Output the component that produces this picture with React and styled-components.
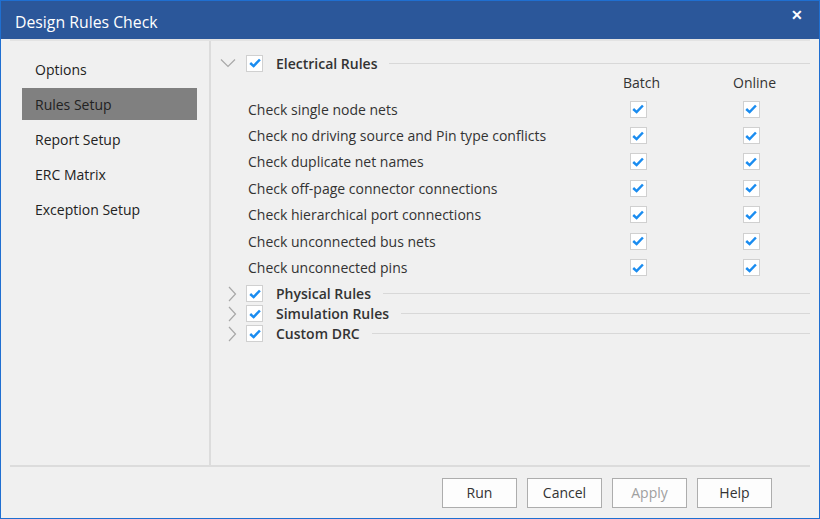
import React from 'react';
import styled, { createGlobalStyle } from 'styled-components';

const GlobalStyle = createGlobalStyle`
  html, body { margin: 0; padding: 0; }
  body {
    font-family: "Open Sans", "Noto Sans", "Liberation Sans", sans-serif;
    background: #f0f0f0;
  }
`;

const navItems = ['Options', 'Rules Setup', 'Report Setup', 'ERC Matrix', 'Exception Setup'];

const electrical = [
  'Check single node nets',
  'Check no driving source and Pin type conflicts',
  'Check duplicate net names',
  'Check off-page connector connections',
  'Check hierarchical port connections',
  'Check unconnected bus nets',
  'Check unconnected pins',
];

const collapsed = ['Physical Rules', 'Simulation Rules', 'Custom DRC'];

function Check() {
  return (
    <Box>
      <svg width="12" height="10" viewBox="0 0 12 10">
        <path d="M1.2 5 L4.6 8.1 L10.9 1.5" fill="none" stroke="#1a8cf0" strokeWidth="2.5" />
      </svg>
    </Box>
  );
}

function Chevron({ open }) {
  return (
    <ChevronBox $open={open}>
      {open ? (
        <svg width="16" height="10" viewBox="0 0 16 10">
          <path d="M1 1.5 L8 8.5 L15 1.5" fill="none" stroke="#a8a8a8" strokeWidth="1.2" />
        </svg>
      ) : (
        <svg width="10" height="16" viewBox="0 0 10 16">
          <path d="M2 1 L8.5 8 L2 15" fill="none" stroke="#a8a8a8" strokeWidth="1.2" />
        </svg>
      )}
    </ChevronBox>
  );
}

export default function App() {
  return (
    <>
      <GlobalStyle />
      <Window>
        <TitleBar>
          <Title>Design Rules Check</Title>
          <Close>✕</Close>
        </TitleBar>
        <Body>
          <Main>
            <Nav>
              {navItems.map((n) => (
                <NavItem key={n} $active={n === 'Rules Setup'}>{n}</NavItem>
              ))}
            </Nav>
            <Content>
              <SectionHead>
                <Chevron open />
                <Check />
                <SectionTitle>Electrical Rules</SectionTitle>
                <Rule />
              </SectionHead>
              <ColHead>
                <span />
                <ColLabel>Batch</ColLabel>
                <ColLabel>Online</ColLabel>
              </ColHead>
              {electrical.map((r) => (
                <Row key={r}>
                  <RowLabel>{r}</RowLabel>
                  <Cell><Check /></Cell>
                  <Cell><Check /></Cell>
                </Row>
              ))}
              <Collapsed>
                {collapsed.map((c) => (
                  <SectionHead key={c} $small>
                    <Chevron />
                    <Check />
                    <SectionTitle>{c}</SectionTitle>
                    <Rule />
                  </SectionHead>
                ))}
              </Collapsed>
            </Content>
          </Main>
          <Footer>
            <Button>Run</Button>
            <Button>Cancel</Button>
            <Button $disabled>Apply</Button>
            <Button>Help</Button>
          </Footer>
        </Body>
      </Window>
    </>
  );
}

const Window = styled.div`
  width: 820px;
  height: 519px;
  box-sizing: border-box;
  border: 1px solid #1f6fd1;
  border-top: none;
  display: flex;
  flex-direction: column;
  background: #f0f0f0;
  overflow: hidden;
`;

const TitleBar = styled.div`
  height: 38px;
  background: #2b579a;
  display: flex;
  align-items: center;
  justify-content: space-between;
  padding: 0 17px 0 15px;
  margin: 0 -1px;
  border-top: 1px solid #1f6fd1;
  flex-shrink: 0;
`;

const Title = styled.div`
  color: #ffffff;
  font-size: 15.8px;
  margin-top: 4px;
`;

const Close = styled.div`
  color: #ffffff;
  font-size: 14px;
  font-weight: 700;
  margin-top: -12px;
`;

const Body = styled.div`
  flex: 1;
  display: flex;
  flex-direction: column;
  padding: 0 9px 0 9px;
`;

const Main = styled.div`
  height: 424px;
  display: flex;
  border-top: 2px solid #e3e3e3;
  border-bottom: 2px solid #dcdcdc;
`;

const Nav = styled.div`
  width: 201px;
  border-right: 2px solid #dcdcdc;
  padding: 12px 12px 0 12px;
  box-sizing: border-box;
  display: flex;
  flex-direction: column;
  gap: 3px;
`;

const NavItem = styled.div`
  height: 32px;
  display: flex;
  align-items: center;
  padding-left: 13px;
  font-size: 14px;
  color: #222;
  background: ${({ $active }) => ($active ? '#808080' : 'transparent')};
`;

const Content = styled.div`
  flex: 1;
  padding: 10px 0 0 9px;
  display: flex;
  flex-direction: column;
`;

const SectionHead = styled.div`
  display: flex;
  align-items: center;
  height: ${({ $small }) => ($small ? '20px' : '24px')};
`;

const ChevronBox = styled.div`
  width: 26px;
  box-sizing: border-box;
  padding-left: ${({ $open }) => ($open ? '0' : '7px')};
  display: flex;
  align-items: center;
`;

const Box = styled.div`
  width: 17px;
  height: 17px;
  box-sizing: border-box;
  border: 1px solid #d0d0d0;
  background: #fff;
  display: flex;
  align-items: center;
  justify-content: center;
`;

const SectionTitle = styled.div`
  font-size: 14px;
  font-weight: 600;
  color: #333;
  margin-left: 13px;
  white-space: nowrap;
`;

const Rule = styled.div`
  flex: 1;
  height: 1px;
  background: #d8d8d8;
  margin-left: 12px;
`;

const ColHead = styled.div`
  display: grid;
  grid-template-columns: 1fr 108px 118px;
  margin-top: -6px;
  height: 27px;
  padding-bottom: 1px;
  box-sizing: border-box;
  align-items: center;
`;

const ColLabel = styled.div`
  font-size: 14px;
  color: #333;
  text-align: center;
  padding-left: 7px;
`;

const Row = styled.div`
  display: grid;
  grid-template-columns: 1fr 108px 118px;
  height: 26.4px;
  align-items: center;
  padding-left: 28px;
`;

const RowLabel = styled.div`
  font-size: 14px;
  color: #333;
`;

const Cell = styled.div`
  display: flex;
  justify-content: center;
`;

const Collapsed = styled.div`
  margin-top: 3px;
  display: flex;
  flex-direction: column;
`;

const Footer = styled.div`
  flex: 1;
  display: flex;
  justify-content: flex-end;
  align-items: center;
  gap: 10px;
  padding-right: 38px;
`;

const Button = styled.button`
  width: 75px;
  height: 30px;
  border: 1px solid #adadad;
  background: #fdfdfd;
  font-family: inherit;
  font-size: 14px;
  color: ${({ $disabled }) => ($disabled ? '#a0a0a0' : '#333')};
`;
